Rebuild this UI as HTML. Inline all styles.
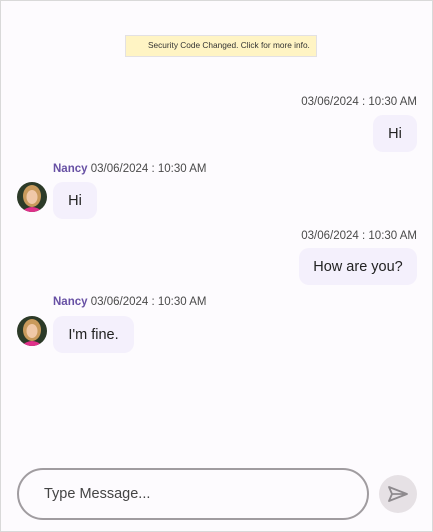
<!DOCTYPE html>
<html><head><meta charset="utf-8"><style>
*{margin:0;padding:0;box-sizing:border-box}
body{width:433px;height:532px;background:#fdfbfe;font-family:"Liberation Sans",sans-serif;position:relative;overflow:hidden}
.frame{position:absolute;left:0;top:0;width:433px;height:532px;border:1px solid #d9d9d9}
.abs{position:absolute}
.banner{left:125px;top:35px;width:192px;height:22px;background:#fff4c4;border:1.5px solid #e3e1e3;font-size:8.3px;color:#333;line-height:19px;padding-left:22px;white-space:nowrap}
.ts{font-size:11.5px;color:#4a4a4a;white-space:nowrap}
.bub{background:#f4f0fc;border-radius:10px;font-size:14.5px;color:#222;display:flex;align-items:center;justify-content:center}
.name{font-size:11.5px;white-space:nowrap;color:#4a4a4a}
.name b{color:#6750a4}
.av{width:30px;height:30px;border-radius:50%;overflow:hidden}
.inp{left:17px;top:468px;width:352px;height:52px;border:2px solid #a09ca0;border-radius:26px;font-size:14.5px;color:#444;padding-left:25px;line-height:48px}
.send{left:379px;top:475px;width:38px;height:38px;border-radius:50%;background:#e6e1e5}
</style></head><body>
<div class="frame"></div>
<div class="abs banner">Security Code Changed. Click for more info.</div>

<div class="abs ts" style="right:16px;top:96px">03/06/2024 : 10:30 AM</div>
<div class="abs bub" style="left:373px;top:115px;width:44px;height:37px">Hi</div>

<div class="abs name" style="left:53px;top:163px"><b>Nancy</b> 03/06/2024 : 10:30 AM</div>
<div class="abs av" style="left:17px;top:182px"><svg width="30" height="30" viewBox="0 0 30 30"><rect width="30" height="30" fill="#2c3a28"/><ellipse cx="15" cy="14" rx="9" ry="11" fill="#c99a5c"/><ellipse cx="15" cy="15" rx="5.5" ry="7" fill="#f0c8a8"/><path d="M4 30 Q15 20 26 30Z" fill="#e0308a"/></svg></div>
<div class="abs bub" style="left:53px;top:182px;width:44px;height:37px">Hi</div>

<div class="abs ts" style="right:16px;top:230px">03/06/2024 : 10:30 AM</div>
<div class="abs bub" style="left:299px;top:248px;width:118px;height:37px">How are you?</div>

<div class="abs name" style="left:53px;top:296px"><b>Nancy</b> 03/06/2024 : 10:30 AM</div>
<div class="abs av" style="left:17px;top:316px"><svg width="30" height="30" viewBox="0 0 30 30"><rect width="30" height="30" fill="#2c3a28"/><ellipse cx="15" cy="14" rx="9" ry="11" fill="#c99a5c"/><ellipse cx="15" cy="15" rx="5.5" ry="7" fill="#f0c8a8"/><path d="M4 30 Q15 20 26 30Z" fill="#e0308a"/></svg></div>
<div class="abs bub" style="left:53px;top:316px;width:81px;height:37px">I'm fine.</div>

<div class="abs inp">Type Message...</div>
<div class="abs send"><svg width="38" height="38" viewBox="0 0 38 38"><path d="M10 12 L28 19 L10 26 L13 19 Z M13 19 L28 19" fill="none" stroke="#8e8a8e" stroke-width="1.8" stroke-linejoin="round"/></svg></div>
</body></html>
